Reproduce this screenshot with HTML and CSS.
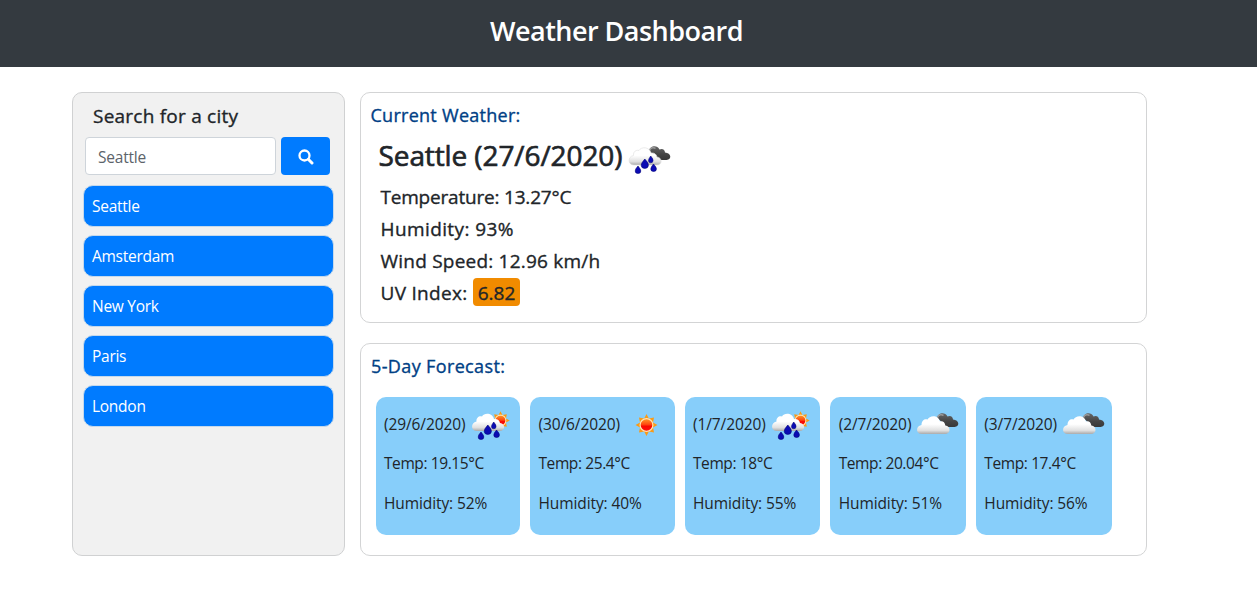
FILE: index.html
```
<!DOCTYPE html>
<html lang="en">
<head>
<meta charset="utf-8">
<title>Weather Dashboard</title>
<link rel="stylesheet" href="styles.css">
</head>
<body>
<svg class="defs" aria-hidden="true">
  <defs>
    <linearGradient id="white" x1="0" y1="0" x2="0" y2="1"><stop offset=".45" stop-color="#fff"/><stop offset=".8" stop-color="#e0e0e0"/><stop offset="1" stop-color="#aaa"/></linearGradient>
    <linearGradient id="dark" x1="0" y1="0" x2="0" y2="1"><stop offset="0" stop-color="#666"/><stop offset=".6" stop-color="#444"/><stop offset="1" stop-color="#383838"/></linearGradient>
    <linearGradient id="sunfill" x1="0" y1="0" x2="0" y2="1"><stop offset="0" stop-color="#ff9c2a"/><stop offset=".45" stop-color="#ff4a10"/><stop offset=".6" stop-color="#f80800"/><stop offset="1" stop-color="#f11"/></linearGradient>
    <path id="cloud" d="M9 34C2.500 34 2.500 26 8.500 25C8.500 20 12 18.500 14.500 19.500C16.500 15 25.500 14.500 27 21.500C29 20.500 32 21.500 32.300 25.500C38 26 38 34 32 34Z"/>
    <path id="raincloud" d="M9 31C2.500 31 2.500 22.500 8.500 21.500C8 17.500 11.500 15.500 14 16.500C16 12.500 24.500 12.500 26 19C29 18.500 31.500 20 32 23C37.500 23.500 37.500 31 32 31Z"/>
    <g id="darkcloud">
      <path d="M24 19C24.500 12.500 32 11.500 34.500 16.500C37.500 15 40 17 40 19.500C46.500 20 47 26.500 41.500 27H33C32 25 30 24 29 23.500C28 20.500 26 19 24 19Z" fill="url(#dark)"/>
      <path d="M24.500 17.500C25.500 14.500 29 14 30.500 15.500" fill="none" stroke="#999" stroke-width="1.500"/>
    </g>
    <g id="drops" fill="#0b0bb4" stroke="#03037a" stroke-width=".6">
      <path d="M13 32Q16 35.500 15.800 37A2.800 2.500 0 0 1 10.200 37Q10.200 35 13 32Z"/>
      <path d="M19.800 25Q23.800 29 23.400 31.300A3.600 3.100 0 0 1 16.200 31.300Q16.200 29 19.800 25Z"/>
      <path d="M25.700 22Q28.400 25 28 26.700A2.200 2 0 0 1 23.500 26.700Q23.500 25 25.700 22Z"/>
      <path d="M28.500 30Q31.700 33.500 31.400 35A2.800 2.500 0 0 1 25.800 35Q25.800 33 28.500 30Z"/>
    </g>
    <g id="sunshape">
      <path d="M0-11L2.300-6.500L7.500-7.500L6.500-2.500L11 0L6.500 2.500L7.500 7.500L2.300 6.500L0 11L-2.300 6.500L-7.500 7.500L-6.500 2.500L-11 0L-6.500-2.500L-7.500-7.500L-2.300-6.500Z" fill="#f99a16"/>
      <circle r="6.400" fill="url(#sunfill)" stroke="#ffe3b5" stroke-width="1.200"/>
    </g>
    <g id="rain"><use href="#darkcloud" y="-1"/><use href="#raincloud" fill="url(#white)" stroke="#ddd" stroke-width=".6"/><use href="#drops"/></g>
    <g id="sunrain"><use href="#sunshape" transform="translate(32.500 20.500) scale(.84)"/><use href="#raincloud" fill="url(#white)"/><use href="#drops"/></g>
    <g id="cloudy"><use href="#darkcloud"/><use href="#cloud" fill="url(#white)"/></g>
  </defs>
</svg>
<header class="header"><h1 class="title">Weather Dashboard</h1></header>
<main class="main">
  <aside class="sidebar">
    <h2 class="search-title">Search for a city</h2>
    <form class="search">
      <input class="search-input" type="text" placeholder="Seattle">
      <button class="search-button" type="button" aria-label="Search"><svg class="search-icon" viewBox="0 0 16 16"><circle cx="6.500" cy="6.500" r="5" fill="none" stroke="#fff" stroke-width="2.300"/><path d="M10.300 10.300L14 14" stroke="#fff" stroke-width="3" stroke-linecap="round"/></svg></button>
    </form>
    <ul class="cities">
      <li class="city">Seattle</li>
      <li class="city">Amsterdam</li>
      <li class="city">New York</li>
      <li class="city">Paris</li>
      <li class="city">London</li>
    </ul>
  </aside>
  <div class="content">
    <section class="panel current">
      <h2 class="panel-title current-title">Current Weather:</h2>
      <div class="place"><h3 class="place-name">Seattle (27/6/2020)</h3><svg class="place-icon" viewBox="0 0 50 50"><use href="#rain"/></svg></div>
      <p class="stat"><span class="temperature">Temperature: 13.27°C</span></p>
      <p class="stat"><span class="humidity">Humidity: 93%</span></p>
      <p class="stat"><span class="wind">Wind Speed: 12.96 km/h</span></p>
      <p class="stat"><span class="uv-label">UV Index:</span><span class="uv">6.82</span></p>
    </section>
    <section class="panel forecast">
      <h2 class="panel-title forecast-title">5-Day Forecast:</h2>
      <div class="days">
        <article class="day"><div class="date"><span>(29/6/2020)</span><svg class="day-icon" viewBox="0 0 50 50"><use href="#sunrain"/></svg></div><p class="line">Temp: 19.15°C</p><p class="line rh">Humidity: 52%</p></article>
        <article class="day"><div class="date"><span>(30/6/2020)</span><svg class="day-icon" viewBox="0 0 50 50"><use href="#sunshape" x="24.500" y="25"/></svg></div><p class="line">Temp: 25.4°C</p><p class="line rh">Humidity: 40%</p></article>
        <article class="day short"><div class="date"><span>(1/7/2020)</span><svg class="day-icon" viewBox="0 0 50 50"><use href="#sunrain"/></svg></div><p class="line">Temp: 18°C</p><p class="line rh">Humidity: 55%</p></article>
        <article class="day short"><div class="date"><span>(2/7/2020)</span><svg class="day-icon" viewBox="0 0 50 50"><use href="#cloudy"/></svg></div><p class="line">Temp: 20.04°C</p><p class="line rh">Humidity: 51%</p></article>
        <article class="day short"><div class="date"><span>(3/7/2020)</span><svg class="day-icon" viewBox="0 0 50 50"><use href="#cloudy"/></svg></div><p class="line">Temp: 17.4°C</p><p class="line rh">Humidity: 56%</p></article>
      </div>
    </section>
  </div>
</main>
</body>
</html>
```
FILE: styles.css
```
* { box-sizing: border-box; margin: 0; padding: 0; }
body { background: #fff; color: #212529; font: 400 16px/24px "Segoe UI", "Open Sans", "Noto Sans", sans-serif; }
.defs { display: block; width: 0; height: 0; }
.header { height: 67px; padding: 14px 24px 0 0; background: #343a40; text-align: center; }
.title { color: #fff; font-size: 27px; line-height: 34px; font-weight: 600; letter-spacing: -.53px; white-space: nowrap; }
.main { display: flex; gap: 15px; padding: 25px 0 0 72px; }
.sidebar { width: 273px; height: 464px; padding: 11px 10px; border: 1px solid #d0d1d2; border-radius: 10px; background: #f1f1f1; }
.search-title { padding-left: 10px; font-size: 19px; line-height: 24px; font-weight: 400; letter-spacing: .23px; -webkit-text-stroke: .35px; }
.search { display: flex; gap: 5px; margin: 9px 0 10px 2px; }
.search-input { width: 191px; height: 38px; padding: 2px 12px 0; border: 1px solid #ced4da; border-radius: 4px; background: #fff; font: inherit; font-size: 15.500px; letter-spacing: -.2px; }
.search-input::placeholder { color: #5c636a; opacity: 1; }
.search-button { display: grid; place-items: center; width: 49px; height: 38px; padding: 2px 0 0; border: 0; border-radius: 4px; background: #007bff; }
.search-icon { width: 16px; height: 16px; }
.cities { display: grid; gap: 8px; list-style: none; }
.city { width: 251px; height: 42px; padding: 8px; border: 1px solid #c5d9ec; border-radius: 10px; background: #007bff; color: #fff; font-size: 15.500px; letter-spacing: -.27px; }
.content { display: grid; grid-template-rows: 231px 213px; gap: 20px; width: 787px; }
.panel { border: 1px solid #d3d4d5; border-radius: 10px; }
.current { padding: 10px 9.500px; }
.panel-title { color: #004085; font-size: 18px; line-height: 24px; font-weight: 400; letter-spacing: .27px; -webkit-text-stroke: .35px; }
.forecast-title { letter-spacing: .37px; }
.place { display: flex; height: 50px; margin: 4px 0 0 8px; }
.place-name { width: 246px; padding-top: 7px; font-size: 28px; line-height: 34px; font-weight: 400; letter-spacing: -.1px; white-space: nowrap; -webkit-text-stroke: .65px; }
.place-icon { width: 50px; height: 50px; margin-top: 3px; }
.stat { display: flex; align-items: center; height: 32px; padding-left: 10px; font-size: 19px; line-height: 28px; font-weight: 400; white-space: nowrap; -webkit-text-stroke: .35px; }
.temperature { letter-spacing: -.2px; }
.humidity { letter-spacing: .4px; }
.wind { letter-spacing: .22px; }
.uv-label { width: 92.500px; letter-spacing: .3px; }
.uv { width: 47px; height: 28px; margin-top: -2px; border-radius: 4px; background: #f18b00; line-height: 30px; text-align: center; }
.forecast { padding: 10px; }
.days { display: flex; gap: 10px; margin: 19px 0 0 4.600px; }
.day { width: 144.500px; height: 138px; padding: 3px 0 0 8.400px; border-radius: 10px; background: #87cefa; font-size: 15.500px; font-weight: 400; letter-spacing: -.4px; }
.short { width: 135.700px; }
.date { display: flex; justify-content: space-between; height: 51px; padding-right: 2.500px; line-height: 49px; letter-spacing: -.1px; white-space: nowrap; }
.day-icon { width: 50px; height: 50px; flex: none; }
.line { height: 40px; white-space: nowrap; }
.rh { letter-spacing: -.1px; }
```
